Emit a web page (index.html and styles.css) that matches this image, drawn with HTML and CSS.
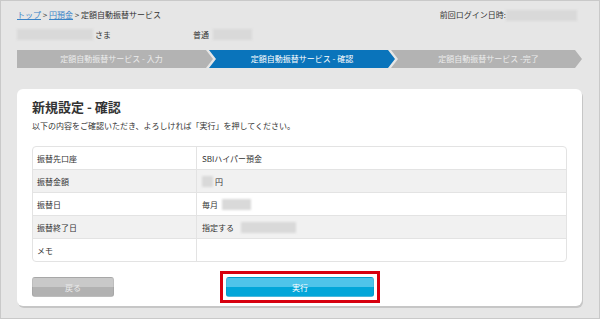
FILE: index.html
```html
<!DOCTYPE html>
<html lang="ja">
<head>
    <meta charset="UTF-8">
    <meta name="viewport" content="width=device-width, initial-scale=1.0">
    <title>定額自動振替サービス - 確認</title>
    <link rel="stylesheet" href="styles.css">
</head>
<body>
    <div class="page">
        <div class="top">
            <div class="breadcrumb">
                <a href="#">トップ</a> &gt; <a href="#">円預金</a> &gt; 定額自動振替サービス
            </div>
            <div class="last-login">
                前回ログイン日時:<span class="masked login-mask"></span>
            </div>
        </div>

        <div class="user-row">
            <div class="user-name"><span class="masked name-mask"></span>さま</div>
            <div class="user-account">普通<span class="masked account-mask"></span></div>
        </div>

        <!-- ステップ -->
        <div class="steps">
            <div class="step step-first">定額自動振替サービス - 入力</div>
            <div class="step step-middle current">定額自動振替サービス - 確認</div>
            <div class="step step-last">定額自動振替サービス -完了</div>
        </div>

        <div class="card">
            <h1 class="card-title">新規設定 - 確認</h1>
            <p class="card-lead">以下の内容をご確認いただき、よろしければ「実行」を押してください。</p>

            <div class="detail">
                <div class="detail-row">
                    <div class="detail-label">振替先口座</div>
                    <div class="detail-value">SBIハイパー預金</div>
                </div>
                <div class="detail-row">
                    <div class="detail-label">振替金額</div>
                    <div class="detail-value"><span class="masked amount-mask"></span>円</div>
                </div>
                <div class="detail-row">
                    <div class="detail-label">振替日</div>
                    <div class="detail-value">毎月<span class="masked day-mask"></span></div>
                </div>
                <div class="detail-row">
                    <div class="detail-label">振替終了日</div>
                    <div class="detail-value">指定する<span class="masked end-mask"></span></div>
                </div>
                <div class="detail-row">
                    <div class="detail-label">メモ</div>
                    <div class="detail-value"></div>
                </div>
            </div>

            <div class="actions">
                <button class="btn btn-back">戻る</button>
                <div class="highlight">
                    <button class="btn btn-run">実行</button>
                </div>
            </div>
        </div>
    </div>
</body>
</html>
```

FILE: styles.css
```css
* {
    margin: 0;
    padding: 0;
    box-sizing: border-box;
    font-family: "Noto Sans CJK JP", "Noto Sans", sans-serif;
}

body {
    background-color: #e6e6e6;
}

.page {
    width: 600px;
    height: 319px;
    border: 1px solid #c9c9c9;
    background-color: #e6e6e6;
    padding: 8px 17px 0 16px;
    color: #333;
    font-size: 8px;
    overflow: hidden;
}

.masked {
    display: inline-block;
    background-color: #d9d9d9;
    filter: blur(1px);
    vertical-align: middle;
}

.top {
    display: flex;
    justify-content: space-between;
    height: 12px;
    line-height: 12px;
}

.breadcrumb a {
    color: #3b83c6;
    text-decoration: underline;
}

.last-login {
    display: flex;
    align-items: center;
    margin-right: 5px;
}

.login-mask {
    width: 71px;
    height: 11px;
}

.user-row {
    display: flex;
    align-items: center;
    height: 11px;
    margin-top: 8px;
    line-height: 11px;
}

.user-name {
    display: flex;
    align-items: center;
    width: 176px;
}

.name-mask {
    width: 76px;
    height: 11px;
    margin-right: 2px;
}

.user-account {
    display: flex;
    align-items: center;
}

.account-mask {
    width: 39px;
    height: 11px;
    margin-left: 4px;
}

.steps {
    display: flex;
    height: 18px;
    margin-top: 10px;
}

.step {
    height: 18px;
    line-height: 18px;
    text-align: center;
    color: #ececec;
    background-color: #b3b3b3;
    flex: none;
}

.step + .step {
    margin-left: -4px;
}

.step-first {
    width: 196px;
    padding-right: 7px;
    clip-path: polygon(0 0, calc(100% - 7px) 0, 100% 50%, calc(100% - 7px) 100%, 0 100%);
}

.step-middle {
    width: 186px;
    clip-path: polygon(0 0, calc(100% - 7px) 0, 100% 50%, calc(100% - 7px) 100%, 0 100%, 7px 50%);
}

.step-last {
    width: 191px;
    padding-left: 4px;
    clip-path: polygon(0 0, calc(100% - 7px) 0, 100% 50%, calc(100% - 7px) 100%, 0 100%, 7px 50%);
}

.step.current {
    background-color: #0a74bb;
    color: #fff;
}

.card {
    margin-top: 21px;
    height: 217px;
    background-color: #fff;
    border-radius: 6px;
    box-shadow: 1px 2px 0 #c6c6c6;
    padding: 10px 15px 0 15px;
}

.card-title {
    font-size: 13px;
    font-weight: bold;
    line-height: 16px;
    color: #333;
}

.card-lead {
    margin-top: 5px;
    line-height: 12px;
}

.detail {
    margin-top: 14px;
    border: 1px solid #e3e3e3;
    border-radius: 4px;
    overflow: hidden;
}

.detail-row {
    display: flex;
    height: 23px;
    border-top: 1px solid #e3e3e3;
}

.detail-row:first-child {
    height: 22px;
    border-top: none;
}

.detail-row:nth-child(even) {
    background-color: #f1f1f1;
}

.detail-label {
    width: 164px;
    padding-left: 4px;
    border-right: 1px solid #e3e3e3;
    display: flex;
    align-items: center;
}

.detail-value {
    flex: 1;
    padding-left: 5px;
    display: flex;
    align-items: center;
}

.amount-mask {
    width: 11px;
    height: 11px;
    margin-right: 2px;
}

.day-mask {
    width: 29px;
    height: 11px;
    margin-left: 4px;
}

.end-mask {
    width: 55px;
    height: 11px;
    margin-left: 7px;
}

.actions {
    display: flex;
    align-items: center;
    margin-top: 9px;
}

.btn {
    display: block;
    height: 20px;
    border: 1px solid rgba(0, 0, 0, 0.06);
    border-radius: 3px;
    color: #fff;
    font-size: 8px;
    cursor: pointer;
}

.btn-back {
    width: 82px;
    background: linear-gradient(#c9c9c9 50%, #b2b2b2 50%);
    color: #eaeaea;
}

.highlight {
    margin-left: 106px;
    border: 3px solid #d7000f;
    padding: 3px;
}

.btn-run {
    width: 148px;
    background: linear-gradient(#4fc4ea 50%, #02a6d9 50%);
}
```
